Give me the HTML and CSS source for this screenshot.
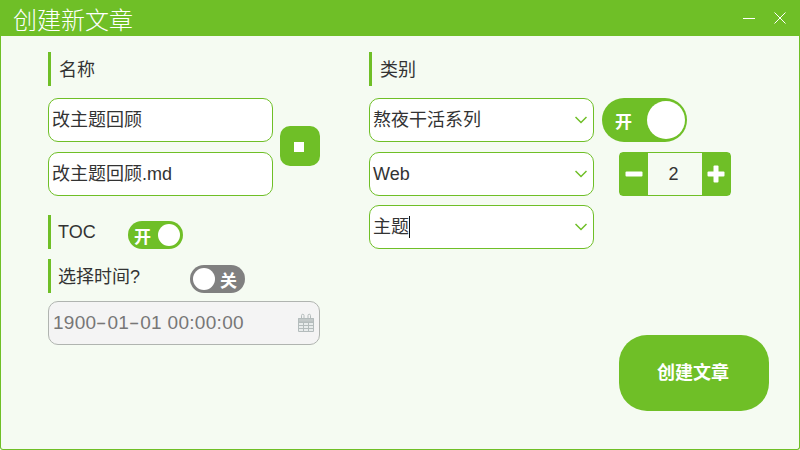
FILE: index.html
```html
<!DOCTYPE html>
<html lang="zh-CN">
<head>
    <meta charset="UTF-8">
    <title>创建新文章</title>
    <link rel="stylesheet" href="styles.css">
</head>
<body>
    <div class="window">
        <div class="title-bar">
            <span class="title">创建新文章</span>
            <div class="win-btns">
                <span class="win-min"></span>
                <svg class="win-close" width="12" height="12" viewBox="0 0 12 12"><path d="M0.5 0.5L11.5 11.5M11.5 0.5L0.5 11.5" stroke="#fff" stroke-width="1" fill="none"/></svg>
            </div>
        </div>

        <div class="content">
            <!-- 左栏 -->
            <div class="col-left">
                <div class="label">名称</div>
                <div class="name-row">
                    <div class="name-fields">
                        <div class="field">改主题回顾</div>
                        <div class="field">改主题回顾.md</div>
                    </div>
                    <button class="sync-btn"><span class="sync-icon"></span></button>
                </div>
                <div class="label-row toc-row">
                    <div class="label">TOC</div>
                    <div class="switch switch-small on"><span class="switch-text">开</span><span class="knob"></span></div>
                </div>
                <div class="label-row time-row">
                    <div class="label">选择时间?</div>
                    <div class="switch switch-small off"><span class="knob"></span><span class="switch-text">关</span></div>
                </div>
                <div class="date-field">
                    <span>1900<span class="date-sep">-</span>01<span class="date-sep">-</span>01 00:00:00</span>
                    <svg width="18" height="20" viewBox="0 0 18 20" fill="none" stroke="#b4bcbc" stroke-width="1">
                        <path d="M1.5 5.5H16.5V18.5H1.5Z" fill="#e8ecec"/>
                        <path d="M1.5 9.5H16.5M1.5 12.5H16.5M1.5 15.5H16.5M6.5 9.5V18.5M11.5 9.5V18.5"/>
                        <path d="M1.5 5.5H16.5V9H1.5Z" fill="#c3c9c9"/>
                        <path d="M4.5 6V2.5A1.2 1.2 0 0 1 7 2.5V6M11 6V2.5A1.2 1.2 0 0 1 13.5 2.5V6"/>
                    </svg>
                </div>
            </div>

            <!-- 右栏 -->
            <div class="col-right">
                <div class="label">类别</div>
                <div class="select-row">
                    <div class="field select">熬夜干活系列
                        <svg class="chevron" width="12" height="8" viewBox="0 0 12 8"><path d="M0.5 1L6 6.5L11.5 1" stroke="#6fbf27" stroke-width="1.5" fill="none"/></svg>
                    </div>
                    <div class="switch switch-big on"><span class="switch-text">开</span><span class="knob"></span></div>
                </div>
                <div class="select-row">
                    <div class="field select">Web
                        <svg class="chevron" width="12" height="8" viewBox="0 0 12 8"><path d="M0.5 1L6 6.5L11.5 1" stroke="#6fbf27" stroke-width="1.5" fill="none"/></svg>
                    </div>
                    <div class="stepper">
                        <span class="step-btn"><span class="bar-h"></span></span>
                        <span class="step-value">2</span>
                        <span class="step-btn"><span class="bar-h"></span><span class="bar-v"></span></span>
                    </div>
                </div>
                <div class="select-row third">
                    <div class="field select"><span class="caret-text">主题</span>
                        <svg class="chevron" width="12" height="8" viewBox="0 0 12 8"><path d="M0.5 1L6 6.5L11.5 1" stroke="#6fbf27" stroke-width="1.5" fill="none"/></svg>
                    </div>
                </div>
                <button class="create-btn">创建文章</button>
            </div>
        </div>
    </div>
</body>
</html>
```

FILE: styles.css
```css
* {
    box-sizing: border-box;
}

body {
    margin: 0;
    font-family: "Liberation Sans", "Noto Sans CJK SC", sans-serif;
    font-size: 18px;
    color: #333;
}

.window {
    width: 800px;
    height: 450px;
    border: 1px solid #6fbf27;
    border-top: none;
    border-radius: 0 0 3px 3px;
    background: #f5fbf2;
    display: flex;
    flex-direction: column;
}

.title-bar {
    height: 36px;
    margin: 0 -1px;
    padding: 0 14px 0 13px;
    background: #6fbf27;
    display: flex;
    align-items: center;
    justify-content: space-between;
    flex-shrink: 0;
}

.title {
    font-size: 24px;
    color: #fff;
    font-family: "Noto Sans CJK SC", sans-serif;
    font-weight: 300;
}

.win-btns {
    display: flex;
    align-items: center;
    gap: 19px;
}

.win-min {
    width: 12px;
    height: 1px;
    background: #fff;
}

.content {
    flex: 1;
    display: flex;
    padding: 16px 30px 38px 47px;
}

.col-left {
    width: 272px;
    margin-right: 49px;
}

.col-right {
    flex: 1;
    display: flex;
    flex-direction: column;
}

.label {
    height: 34px;
    line-height: 37px;
    padding-left: 8px;
    border-left: 3px solid #6fbf27;
}

.field {
    width: 225px;
    height: 44px;
    line-height: 43px;
    padding-left: 3px;
    background: #fff;
    border: 1px solid #6fbf27;
    border-radius: 10px;
}

.name-row {
    margin-top: 12px;
    display: flex;
    align-items: center;
    justify-content: space-between;
}

.name-fields {
    display: flex;
    flex-direction: column;
    gap: 10px;
}

.sync-btn {
    width: 40px;
    height: 40px;
    margin-bottom: 2px;
    padding: 0;
    border: none;
    border-radius: 10px;
    background: #6fbf27;
    display: flex;
    align-items: center;
    justify-content: center;
}

.sync-icon {
    width: 10px;
    height: 10px;
    margin: 2px 2px 0 0;
    background: #fff;
}

.label-row {
    display: flex;
    align-items: flex-start;
}

.toc-row {
    margin-top: 19px;
}

.toc-row .label {
    width: 80px;
    padding-left: 7px;
    line-height: 34px;
}

.time-row {
    margin-top: 10px;
}

.time-row .label {
    width: 142px;
    padding-left: 7px;
    line-height: 37px;
}

.switch {
    background: #6fbf27;
    border-radius: 22px;
    display: flex;
    align-items: center;
    color: #fff;
    font-size: 17px;
    font-weight: bold;
}

.switch.off {
    background: #808080;
}

.knob {
    background: #fff;
    border-radius: 50%;
}

.switch-small {
    width: 55px;
    height: 28px;
    margin-top: 6px;
    padding: 0 3px 0 6px;
    justify-content: space-between;
}

.switch-small.off {
    padding: 0 8px 0 3px;
}

.switch-small .knob {
    width: 22px;
    height: 22px;
}

.switch-big {
    width: 85px;
    height: 44px;
    margin-left: 8px;
    padding: 0 2px 0 13px;
    justify-content: space-between;
}

.switch-big .knob {
    width: 38px;
    height: 38px;
}

.date-field {
    margin-top: 8px;
    height: 44px;
    padding: 0 4px 0 4px;
    border: 1px solid #b0b4b0;
    border-radius: 10px;
    background: #f4f4f4;
    color: #777;
    font-size: 19px;
    letter-spacing: 0.3px;
    display: flex;
    align-items: center;
    justify-content: space-between;
}

/* 日期里的横线比字体自带的宽 */
.date-sep {
    display: inline-block;
    width: 11px;
    text-align: center;
    transform: scaleX(1.7);
}

.select-row {
    margin-top: 10px;
    display: flex;
    align-items: center;
}

.select-row:nth-child(2) {
    margin-top: 12px;
}

.select-row.third {
    margin-top: 9px;
}

.select {
    position: relative;
}

.chevron {
    position: absolute;
    right: 6px;
    top: 17px;
}

.caret-text {
    border-right: 1px solid #111;
    padding: 1px 0;
}

.stepper {
    width: 112px;
    height: 44px;
    margin-left: 25px;
    border: 1px solid #6fbf27;
    border-radius: 4px;
    display: flex;
    align-items: center;
}

.step-btn {
    position: relative;
    width: 28px;
    height: 100%;
    background: #6fbf27;
}

.bar-h,
.bar-v {
    position: absolute;
    background: #fff;
    border-radius: 1px;
    left: 50%;
    top: 50%;
    transform: translate(-50%, -50%);
}

.bar-h {
    width: 17px;
    height: 5px;
}

.bar-v {
    width: 5px;
    height: 17px;
}

.step-value {
    flex: 1;
    padding-right: 3px;
    text-align: center;
}

.create-btn {
    width: 150px;
    height: 76px;
    margin-top: auto;
    margin-left: auto;
    padding: 0 2px 4px 0;
    border: none;
    border-radius: 28px;
    background: #6fbf27;
    color: #fff;
    font-family: inherit;
    font-size: 18px;
    font-weight: bold;
}
```
